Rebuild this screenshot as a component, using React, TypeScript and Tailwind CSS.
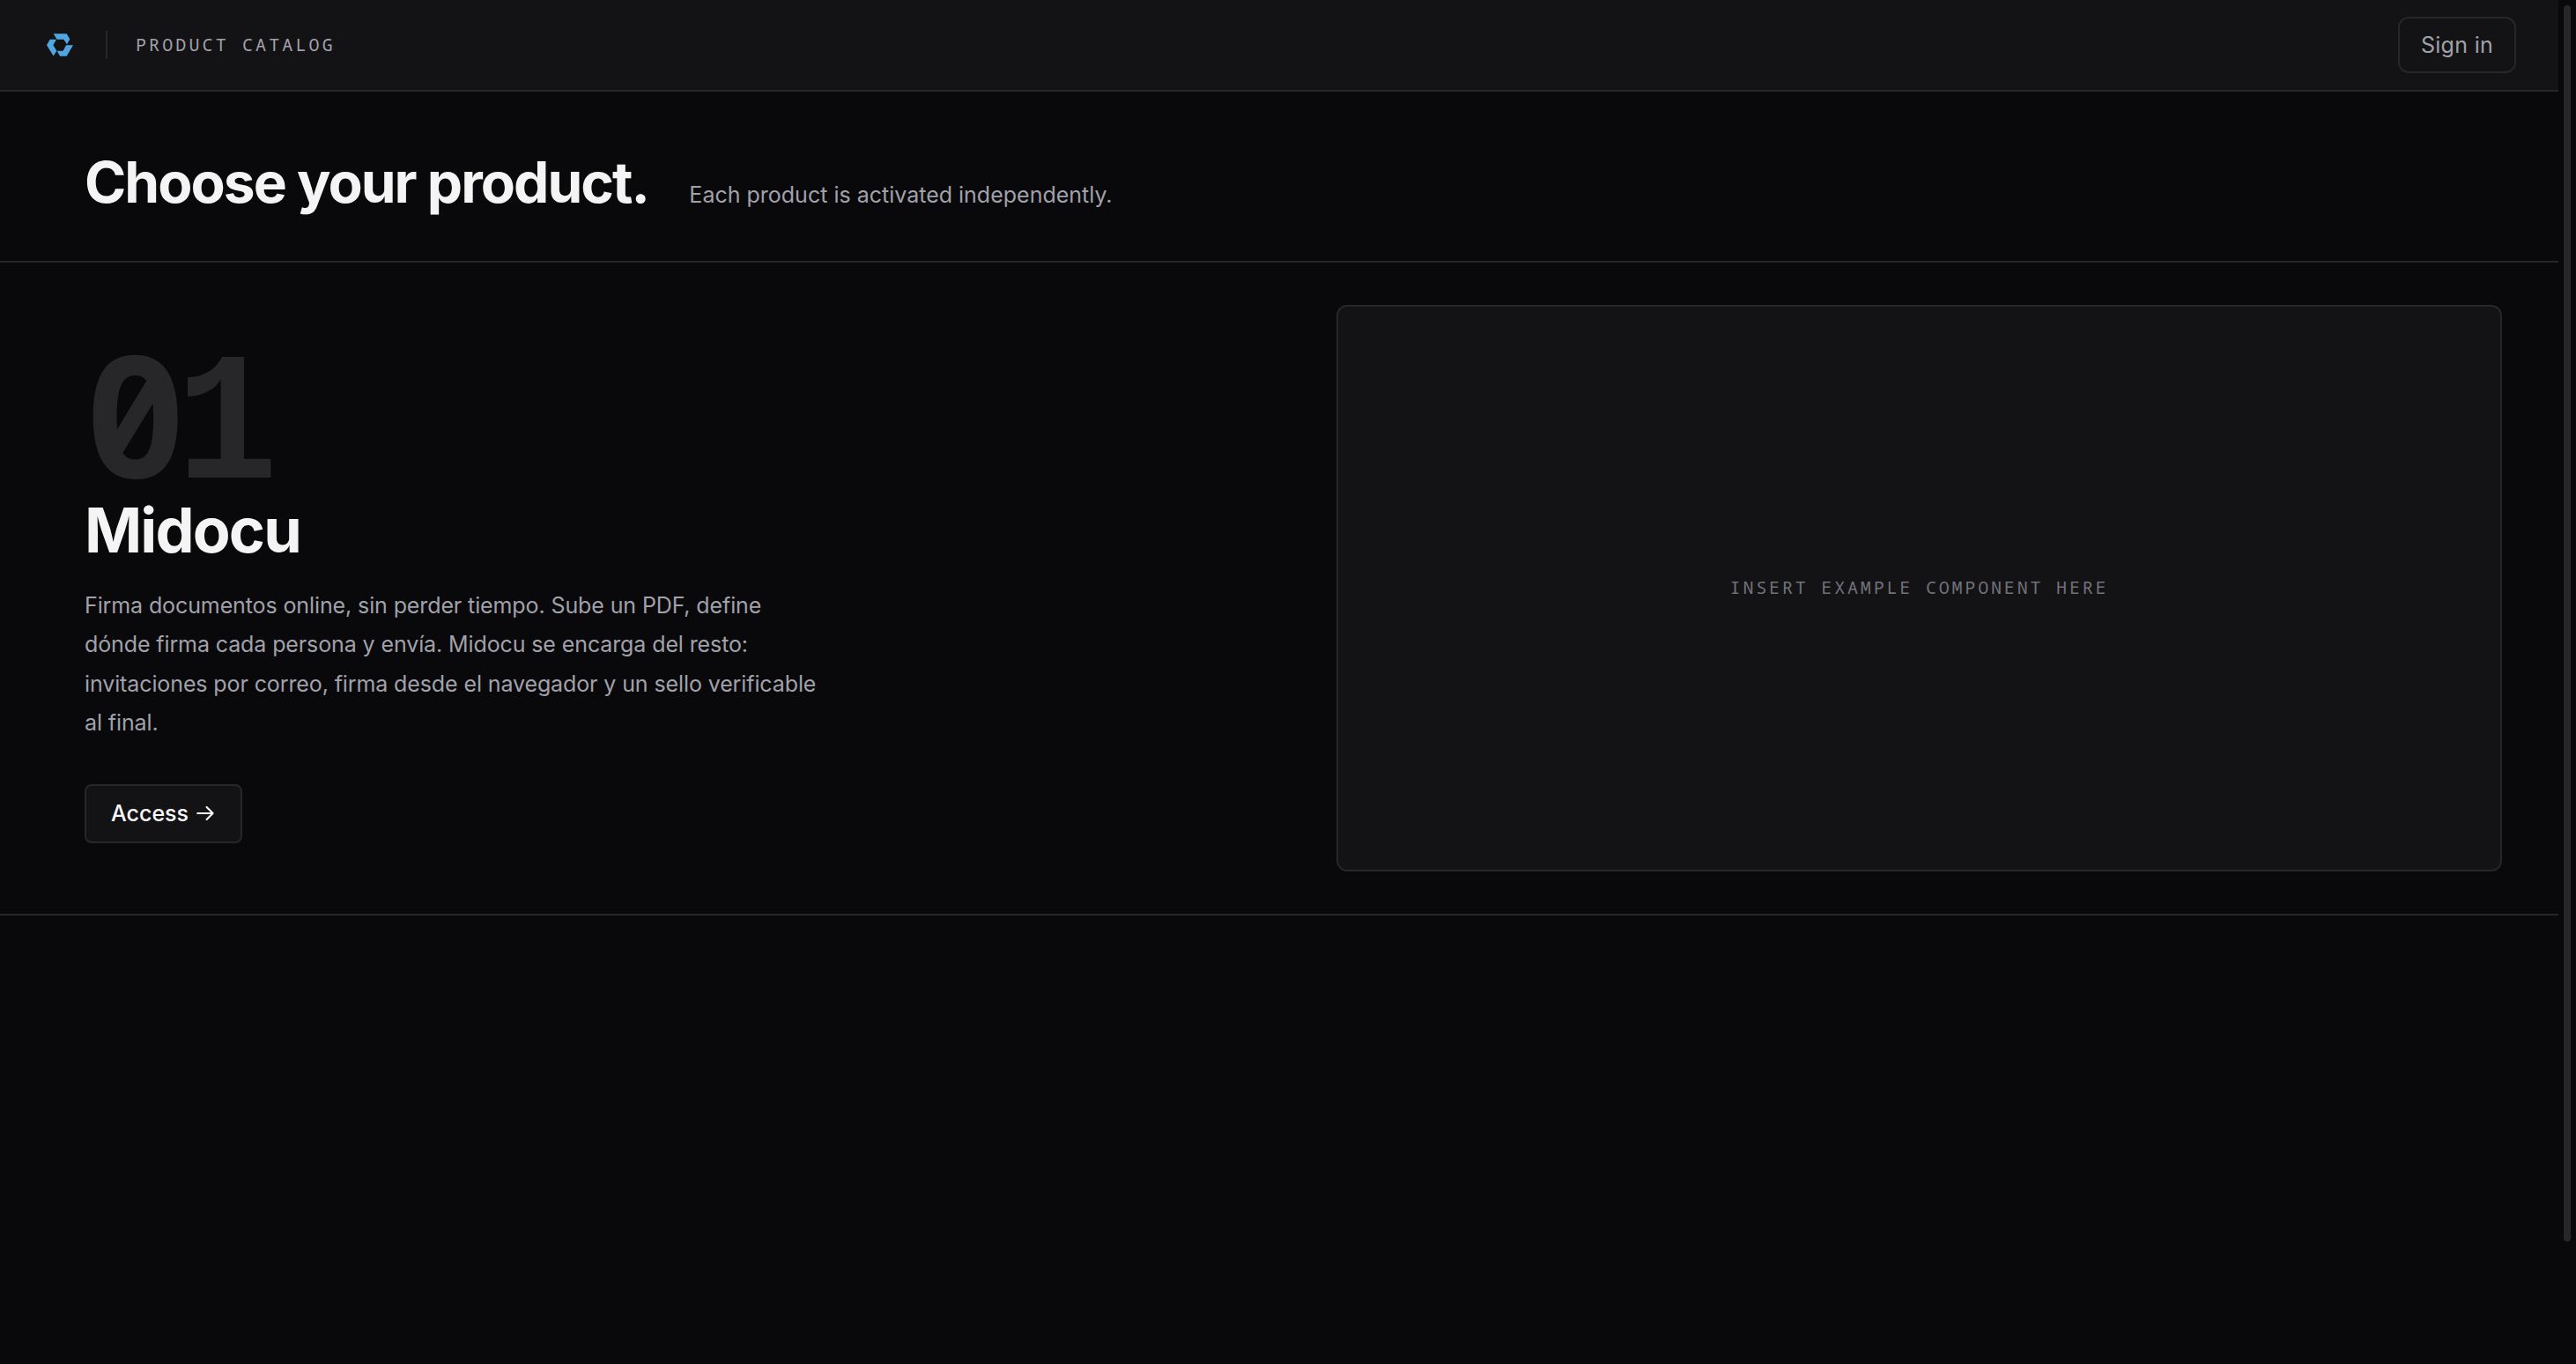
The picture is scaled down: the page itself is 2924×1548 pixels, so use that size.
function Logo() {
  return (
    <svg viewBox="0 0 90 77" className="h-[26px] w-[30px]" fill="#4fa6e0" aria-hidden="true">
      <path d="M23 0H68L79 19L69 36L58 20H35Z" />
      <path d="M0 39L11 20H33L22 39L34 59L23 76Z" />
      <path d="M66 39H90L68 77H45L35 59H56Z" />
    </svg>
  );
}

function Arrow() {
  return (
    <svg
      viewBox="0 0 20 16"
      className="ml-[9px] h-4 w-5"
      fill="none"
      stroke="currentColor"
      strokeWidth="2.1"
      strokeLinecap="round"
      strokeLinejoin="round"
      aria-hidden="true"
    >
      <path d="M1.2 8H18.6M11.6 1.1L18.6 8L11.6 14.9" />
    </svg>
  );
}

function Header() {
  return (
    <header className="flex h-[104px] items-center border-b-2 border-[#27272a] bg-[#131315] pl-[53px] pr-12">
      <Logo />
      <span className="ml-[37px] h-8 w-0.5 bg-[#27272a]" />
      <span className="ml-8 font-['Noto_Sans_Mono',monospace] text-[20px] leading-8 tracking-[3.12px] text-[#a1a1aa]">
        PRODUCT CATALOG
      </span>
      <button className="ml-auto flex h-16 w-[134px] items-center justify-center rounded-xl border-2 border-[#27272a] pt-0.5 text-[25px] tracking-[0.3px] text-[#a1a1aa]">
        Sign in
      </button>
    </header>
  );
}

function Intro() {
  return (
    <section className="flex h-[194px] items-baseline border-b-2 border-[#27272a] pl-24 pt-[71px]">
      <h1 className="text-[64px] font-bold leading-[64px] tracking-[-1.97px] text-[#f4f4f5]">
        Choose your product.
      </h1>
      <p className="ml-[46.5px] text-[25px] text-[#a1a1aa]">
        Each product is activated independently.
      </p>
    </section>
  );
}

function Product() {
  return (
    <section className="flex h-[741px] items-start border-b-2 border-[#27272a] pl-24 pr-16">
      <div className="flex flex-col items-start pt-[74px]">
        <div className="flex h-[192px] items-baseline font-bold leading-[192px] text-[#27272a]">
          <span className="font-['Noto_Sans_Mono',monospace] text-[192px] tracking-[-7.68px]">0</span>
          <span className="-ml-1 origin-left scale-x-[0.93] font-['Liberation_Mono',monospace] text-[207px]">
            1
          </span>
        </div>
        <h2 className="mt-0.5 text-[70px] font-bold leading-[72px] tracking-[-1.85px] text-[#f4f4f5]">
          Midocu
        </h2>
        <p className="mt-[27px] whitespace-nowrap text-[25px] leading-[44.4px] tracking-[-0.11px] text-[#a1a1aa]">
          Firma documentos online, sin perder tiempo. Sube un PDF, define
          <br />
          dónde firma cada persona y envía. Midocu se encarga del resto:
          <br />
          invitaciones por correo, firma desde el navegador y un sello verificable
          <br />
          al final.
        </p>
        <button className="mt-[47px] flex h-[67px] w-[179px] items-center rounded-lg border-2 border-[#27272a] bg-[#131315] pl-7 text-[25px] font-medium text-[#fafafa]">
          <span className="pt-0.5">Access</span>
          <Arrow />
        </button>
      </div>
      <div className="ml-auto mt-12 flex h-[643px] w-[1323px] items-center justify-center rounded-xl border-2 border-[#27272a] bg-[#131315]">
        <span className="pb-0.5 font-['Noto_Sans_Mono',monospace] text-[20px] leading-8 tracking-[2.82px] text-[#71717a]">
          INSERT EXAMPLE COMPONENT HERE
        </span>
      </div>
    </section>
  );
}

export default function App() {
  return (
    <div className="flex h-[1548px] w-[2924px] overflow-hidden bg-[#09090b] font-['Inter',sans-serif]">
      <main className="w-[2904px] shrink-0">
        <Header />
        <Intro />
        <Product />
      </main>
      <div className="w-5 pl-1.5 pt-1.5">
        <div className="h-[1403px] w-2 rounded-full bg-[#27272a]" />
      </div>
    </div>
  );
}
